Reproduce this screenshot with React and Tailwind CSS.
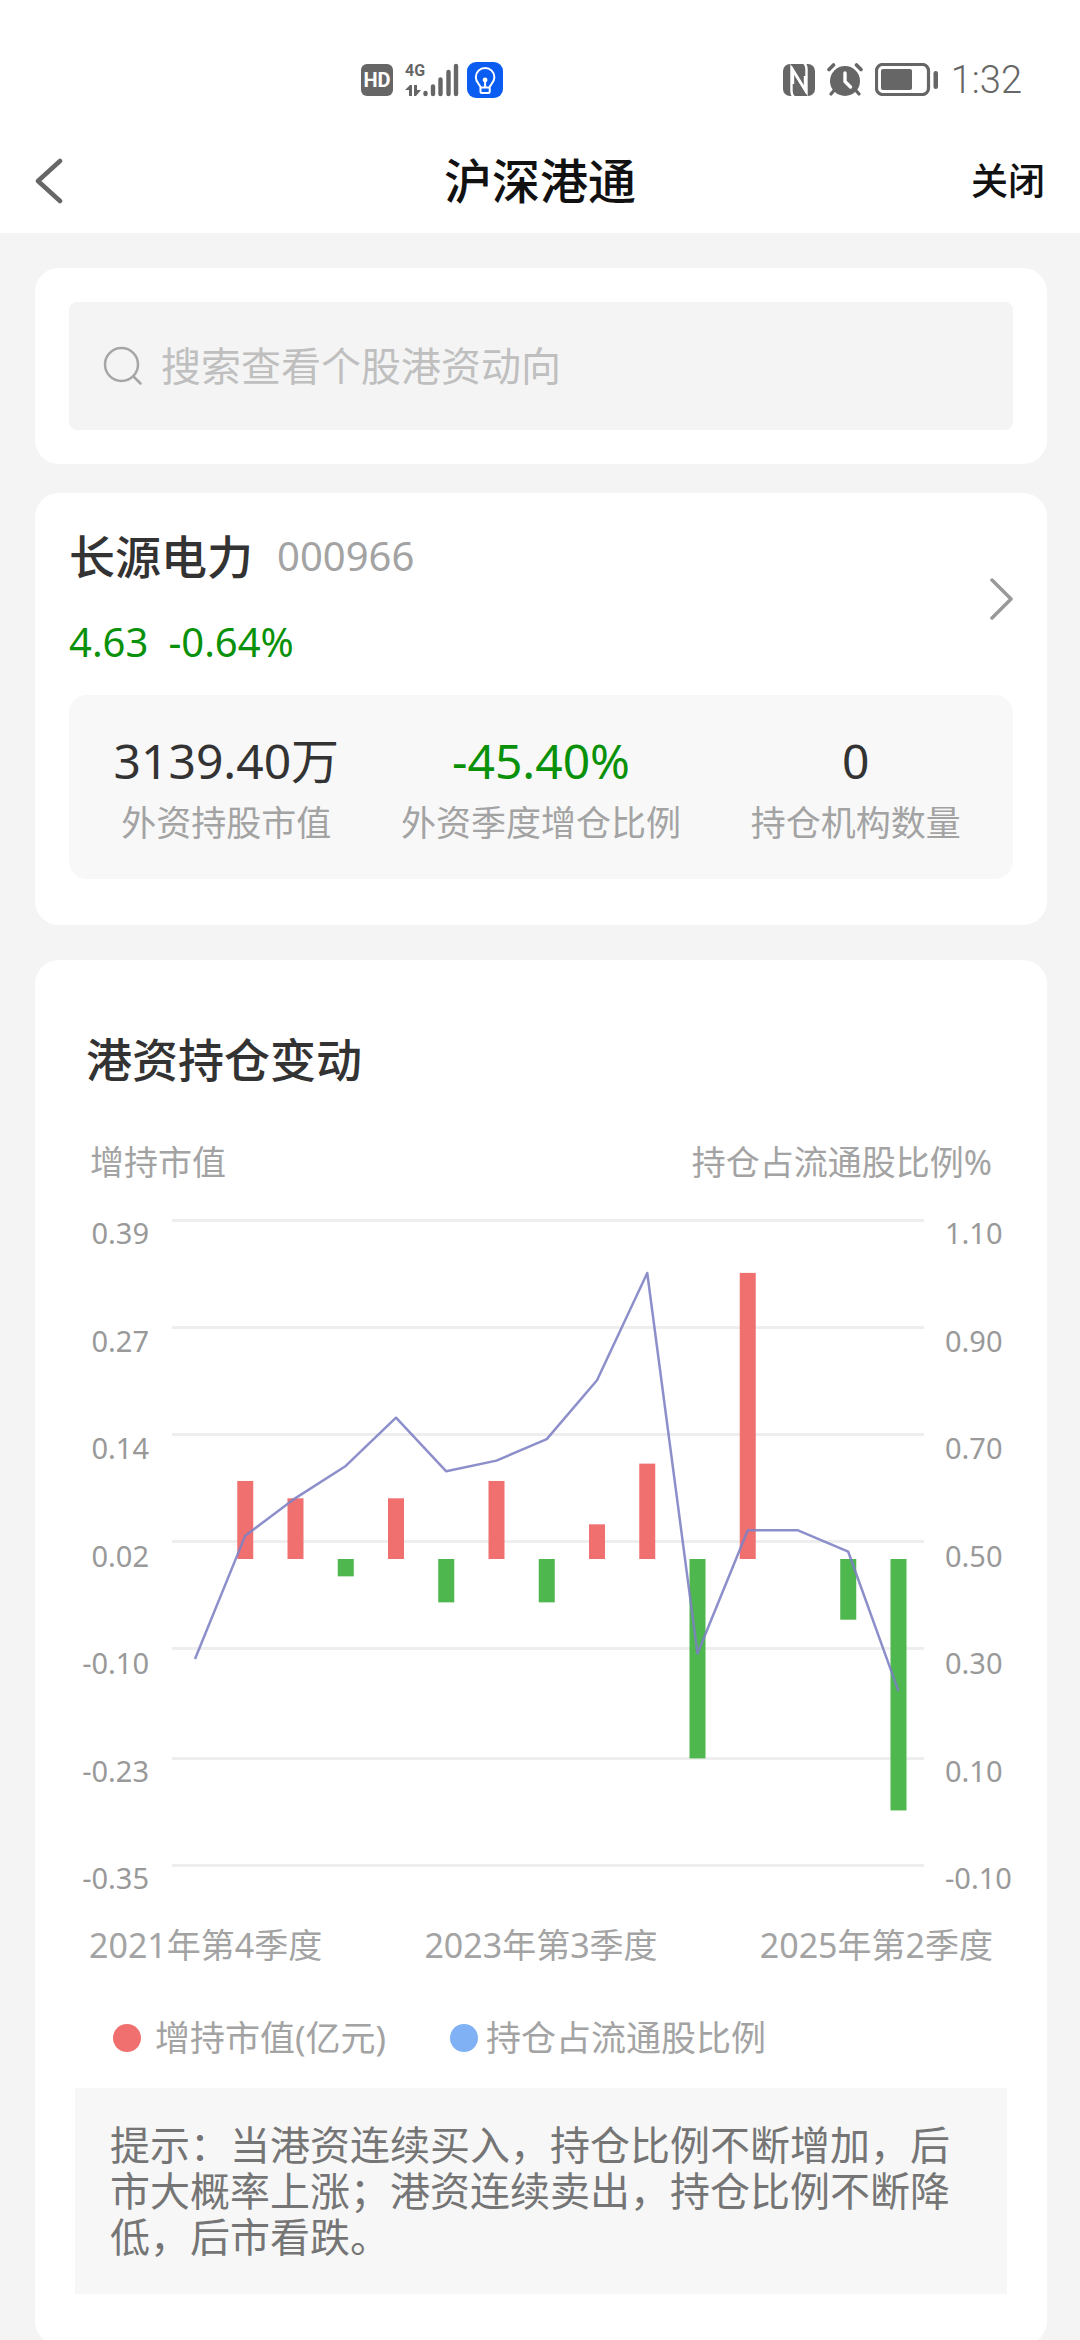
const STATS = [
  { value: "3139.40万", label: "外资持股市值", color: "text-[#333333]" },
  { value: "-45.40%", label: "外资季度增仓比例", color: "text-[#0a910a]" },
  { value: "0", label: "持仓机构数量", color: "text-[#333333]" },
];

const LEFT_AXIS = ["0.39", "0.27", "0.14", "0.02", "-0.10", "-0.23", "-0.35"];
const RIGHT_AXIS = ["1.10", "0.90", "0.70", "0.50", "0.30", "0.10", "-0.10"];
const QUARTERS = ["2021年第4季度", "2023年第3季度", "2025年第2季度"];

const GRID = [1, 108, 215, 322, 429, 539, 646];
const CHANGES = [0, 0.09, 0.07, -0.02, 0.07, -0.05, 0.09, -0.05, 0.04, 0.11, -0.23, 0.33, 0, -0.07, -0.29];
const RATIOS = [0.28, 0.51, 0.58, 0.64, 0.73, 0.63, 0.65, 0.69, 0.8, 1.0, 0.29, 0.52, 0.52, 0.48, 0.22];

const xAt = (i) => 23 + i * 50.25;
const changeY = (v) => 340 - v * 867;
const ratioY = (v) => 590 - v * 536;

function HoldingChart() {
  return (
    <svg viewBox="0 0 752 648" className="block w-full" role="img" aria-label="港资持仓变动">
      {GRID.map((y) => (
        <rect key={y} x="0" y={y - 1} width="752" height="3" fill="#eeeeee" />
      ))}
      {CHANGES.map((v, i) => {
        const y = changeY(v);
        return (
          <rect
            key={i}
            x={xAt(i) - 8}
            y={Math.min(y, 340)}
            width="16"
            height={Math.abs(y - 340)}
            fill={v > 0 ? "#f07070" : "#4eb74e"}
          />
        );
      })}
      <polyline
        points={RATIOS.map((v, i) => `${xAt(i)},${ratioY(v)}`).join(" ")}
        fill="none"
        stroke="#7d80c4"
        strokeOpacity="0.88"
        strokeWidth="2.5"
        strokeLinejoin="round"
      />
    </svg>
  );
}

function SignalIcon() {
  return (
    <div className="relative h-[34px] w-[54px] text-[#666666]">
      <svg viewBox="0 0 54 34" className="h-full w-full" fill="#666666" aria-hidden="true">
        <path d="M0 27 5 22h2v11H4v-6zM9 22h3v5h4l-5 6H9z" />
        <path
          d="M20.500 30v1M28 23.500v7.500M35.500 16.500v14.500M43.500 9v22M51 3v28"
          stroke="#666666"
          strokeWidth="4.400"
          strokeLinecap="round"
        />
      </svg>
      <span className="absolute top-0 left-0 font-['Roboto'] text-base leading-4 font-bold">4G</span>
    </div>
  );
}

function BulbIcon() {
  return (
    <svg viewBox="0 0 36 36" className="h-9 w-9" fill="none" aria-hidden="true">
      <rect width="36" height="36" rx="9" fill="#0b5cf0" />
      <path
        d="M13.500 25.500c0-3-4.700-4.500-4.700-10.300a9.300 9.300 0 0 1 18.600 0c0 5.800-4.700 7.300-4.700 10.300z"
        stroke="#fff"
        strokeWidth="2"
        strokeLinejoin="round"
      />
      <path d="M13.500 26v3.500q0 1.500 1.500 1.500h6.200q1.500 0 1.500-1.500V26M18.100 18v7.500" stroke="#fff" strokeWidth="2" />
      <circle cx="18.100" cy="18" r="2.400" fill="#fff" />
    </svg>
  );
}

function NfcIcon() {
  return (
    <svg viewBox="0 0 32 32" className="h-8 w-8" fill="none" aria-hidden="true">
      <rect width="32" height="32" rx="7" fill="#666666" />
      <g stroke="#fff" strokeWidth="2.400" strokeLinejoin="miter">
        <path d="M11 33q-2.500-2-2.500-6V4L22 26V12" />
        <path d="M21 -1q2.500 2 2.500 6v23L10 6v14" />
      </g>
    </svg>
  );
}

function AlarmIcon() {
  return (
    <svg viewBox="0 0 36 33" className="h-[33px] w-9" fill="none" stroke="#666666" strokeLinecap="round" aria-hidden="true">
      <circle cx="18" cy="18" r="15" fill="#666666" stroke="none" />
      <path d="M2 6.500 6.500 2M34 6.500 29.500 2" strokeWidth="3.600" />
      <path d="M7 27.500 4 31M29 27.500 32 31" strokeWidth="3.200" />
      <path d="M18 10v8.500l5.500 5.500" stroke="#fff" strokeWidth="3.400" strokeLinejoin="round" />
    </svg>
  );
}

function BatteryIcon() {
  return (
    <svg viewBox="0 0 64 33" className="h-[33px] w-16" aria-hidden="true">
      <rect x="1.500" y="1.500" width="52" height="30" rx="6" fill="none" stroke="#666666" strokeWidth="3.200" />
      <rect x="6" y="6" width="31" height="21" rx="2" fill="#666666" />
      <rect x="58.500" y="8" width="4.500" height="18" rx="2.200" fill="#666666" />
    </svg>
  );
}

export default function App() {
  return (
    <div className="flex h-screen flex-col overflow-hidden bg-[#f4f4f4] font-['Noto_Sans','Noto_Sans_CJK_SC',sans-serif] text-[#333333]">
      <header className="shrink-0 bg-white">
        <div className="flex h-[129px] items-center pt-[30px] pr-[58px]">
          <div className="w-[361px]" />
          <div className="flex flex-1 items-center">
            <span className="flex h-8 w-8 items-center justify-center rounded-md bg-[#666666] font-['Roboto'] text-xl font-bold text-white">
              HD
            </span>
            <div className="ml-3">
              <SignalIcon />
            </div>
            <div className="ml-2">
              <BulbIcon />
            </div>
          </div>
          <div className="flex items-center gap-3">
            <NfcIcon />
            <AlarmIcon />
            <BatteryIcon />
            <span className="font-['Roboto'] text-[38px] leading-10 font-light text-[#666666]">1:32</span>
          </div>
        </div>
        <nav className="grid h-[104px] grid-cols-3 items-center px-[35px]">
          <button type="button" aria-label="返回" className="justify-self-start">
            <svg viewBox="0 0 28 46" className="h-[46px] w-7" fill="none" stroke="#666666" strokeWidth="4.500" strokeLinecap="round" strokeLinejoin="round">
              <path d="M25 3 3 23l22 20" />
            </svg>
          </button>
          <h1 className="justify-self-center text-5xl font-medium text-[#111111]">沪深港通</h1>
          <button type="button" className="justify-self-end text-[37px] font-medium text-[#111111]">关闭</button>
        </nav>
      </header>

      <main className="flex-1 overflow-y-auto pt-[35px] pr-[33px] pb-[35px] pl-[35px] [scrollbar-width:none]">
        <section className="rounded-3xl bg-white p-[34px]">
          <label className="flex h-32 items-center gap-[18px] rounded-lg bg-[#f4f4f4] px-[34px]">
            <svg viewBox="0 0 40 40" className="h-10 w-10 shrink-0" fill="none" stroke="#a6a6a6" strokeWidth="2.500" strokeLinecap="round">
              <circle cx="18.500" cy="18.500" r="16.500" />
              <path d="m30.500 30.500 7 7" />
            </svg>
            <input
              type="search"
              aria-label="搜索查看个股港资动向"
              placeholder="搜索查看个股港资动向"
              className="w-full bg-transparent text-[40px] outline-none placeholder:text-[#bfbfbf]"
            />
          </label>
        </section>

        <section className="mt-[29px] rounded-3xl bg-white px-[34px] pt-9 pb-[46px]">
          <a href="#stock" className="flex items-center justify-between">
            <div>
              <div className="flex items-center gap-6 leading-[54px]">
                <h2 className="text-[46px] font-medium">长源电力</h2>
                <span className="text-[40px] text-[#a3a3a3]">000966</span>
              </div>
              <div className="mt-8 flex gap-5 text-[40px] leading-[54px] text-[#0a910a]">
                <span>4.63</span>
                <span>-0.64%</span>
              </div>
            </div>
            <svg viewBox="0 0 24 44" className="h-11 w-6" fill="none" stroke="#999999" strokeWidth="3.500" strokeLinecap="round" strokeLinejoin="round" aria-hidden="true">
              <path d="m3 3 19 19L3 41" />
            </svg>
          </a>
          <dl className="mt-[26px] grid grid-cols-3 rounded-[18px] bg-[#f8f8f8] pt-[38px] pb-8 text-center">
            {STATS.map((s) => (
              <div key={s.label} className="flex flex-col-reverse gap-[10px]">
                <dt className="text-[35px] leading-[48px] text-[#a3a3a3]">{s.label}</dt>
                <dd className={`text-5xl leading-[56px] ${s.color}`}>{s.value}</dd>
              </div>
            ))}
          </dl>
        </section>

        <section className="mt-[35px] rounded-3xl bg-white pt-[69px] pb-[51px]">
          <h2 className="px-[51px] text-[46px] leading-[60px] font-medium">港资持仓变动</h2>
          <div className="mt-12 flex justify-between px-[55px] text-[34px] leading-[50px] text-[#a3a3a3]">
            <span>增持市值</span>
            <span>持仓占流通股比例%</span>
          </div>

          <div className="mt-8 flex pr-7 pl-10 text-[29px] leading-7 text-[#999999]">
            <div className="flex w-[74px] flex-col justify-between text-right">
              {LEFT_AXIS.map((t) => (
                <span key={t}>{t}</span>
              ))}
            </div>
            <div className="flex-1 pr-[21px] pb-[25px] pl-[23px]">
              <HoldingChart />
            </div>
            <div className="flex w-[74px] flex-col justify-between">
              {RIGHT_AXIS.map((t) => (
                <span key={t}>{t}</span>
              ))}
            </div>
          </div>

          <div className="mt-7 flex justify-between px-[54px] text-[34px] leading-[50px] text-[#a3a3a3]">
            {QUARTERS.map((q) => (
              <span key={q}>{q}</span>
            ))}
          </div>

          <ul className="mt-[43px] flex gap-16 px-[78px] text-[35px] leading-[50px] text-[#a3a3a3]">
            <li className="flex items-center gap-[14px]">
              <span className="h-7 w-7 rounded-full bg-[#f07070]" />
              增持市值(亿元)
            </li>
            <li className="flex items-center gap-2">
              <span className="h-7 w-7 rounded-full bg-[#7fb1f4]" />
              持仓占流通股比例
            </li>
          </ul>

          <p className="mx-10 mt-[25px] bg-[#f7f7f7] px-[35px] py-[34px] text-[40px] leading-[46px] text-[#757575]">
            提示：当港资连续买入，持仓比例不断增加，后市大概率上涨；港资连续卖出，持仓比例不断降低，后市看跌。
          </p>
        </section>
      </main>
    </div>
  );
}
